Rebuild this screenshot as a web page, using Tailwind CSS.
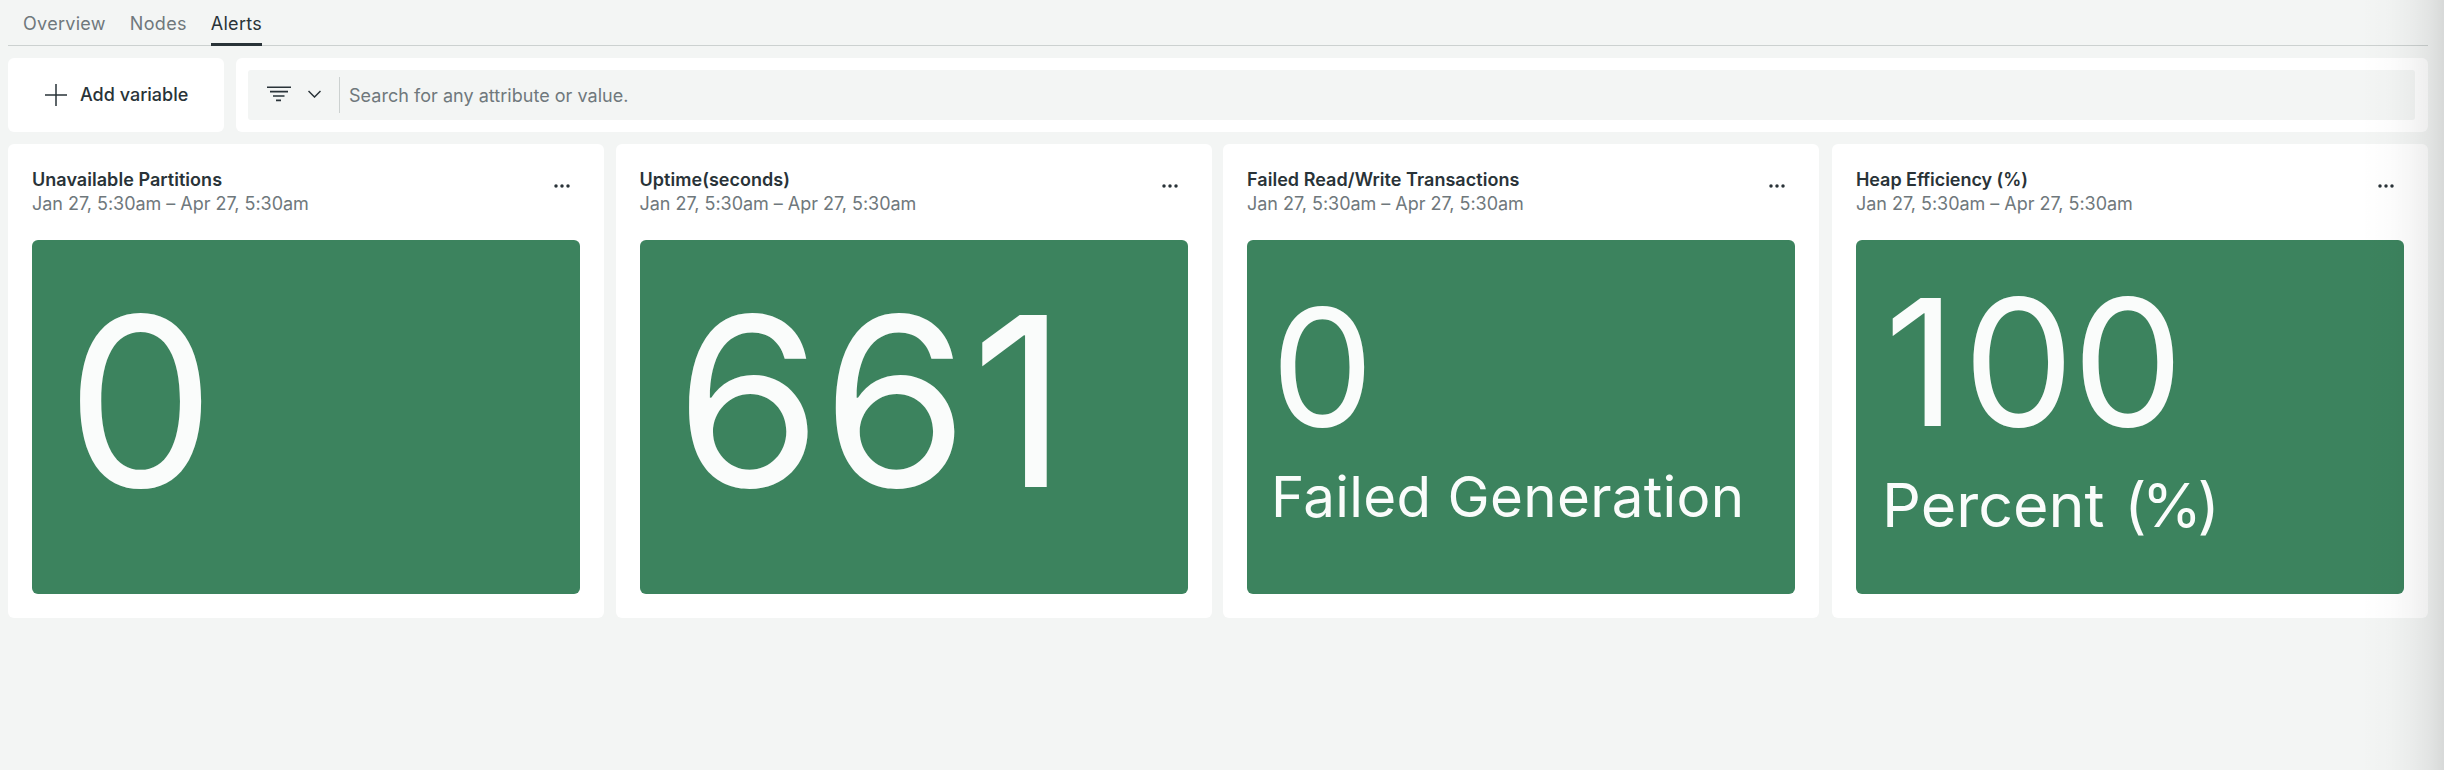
<!DOCTYPE html>
<html lang="en">
<head>
<meta charset="utf-8">
<title>Alerts</title>
<script src="https://cdn.jsdelivr.net/npm/@tailwindcss/browser@4"></script>
</head>
<body class="relative h-[770px] overflow-hidden bg-[#f3f5f4] pl-2 pr-4 font-['Inter',sans-serif] text-[18px] leading-6 text-[#293338]">
<nav class="flex h-[46px] gap-6 border-b border-[#ccd1d0] pl-[15px] pt-3 tracking-[0.3px] text-[#6f787c]">
  <a class="h-[34px]">Overview</a>
  <a class="h-[34px]">Nodes</a>
  <a class="h-[34px] border-b-3 border-[#293338] text-[#293338]">Alerts</a>
</nav>
<div class="mt-3 flex h-[74px] gap-3">
  <button class="flex w-[216px] items-center rounded-md bg-white pl-[37px] font-medium">
    <svg class="mr-[13px] size-[22px]" viewBox="0 0 22 22" fill="none" stroke="#293338" stroke-width="1.5"><path d="M11 0v22M0 11h22"/></svg>
    <span>Add variable</span>
  </button>
  <div class="flex-1 rounded-md bg-white py-3 pl-3 pr-[13px]">
    <div class="flex h-[50px] items-center rounded-[3px] bg-[#f3f5f4] pl-[19px]">
      <svg class="mb-[3px] h-4 w-6" viewBox="0 0 24 16" fill="none" stroke="#293338" stroke-width="1.6"><path d="M0 1.3h24M3 5.6h18M6 10h11.5M9 14.4h5"/></svg>
      <svg class="ml-[17px] mb-[3px] h-2 w-[13px]" viewBox="0 0 13 8" fill="none" stroke="#293338" stroke-width="1.5"><path d="M.5 1l6 6 6-6"/></svg>
      <div class="ml-[18px] h-9 w-px bg-[#ccd1d0]"></div>
      <span class="ml-[9px] mt-[2px] tracking-[0.03px] text-[#6f787c]">Search for any attribute or value.</span>
    </div>
  </div>
</div>
<main class="mt-3 grid grid-cols-4 gap-3">
  <section class="h-[474px] rounded-md bg-white p-6">
    <header class="flex h-[72px] justify-between pr-1.5">
      <div><h2 class="font-semibold tracking-[0.04px]">Unavailable Partitions</h2><p class="tracking-[-0.03px] text-[#6f787c]">Jan 27, 5:30am – Apr 27, 5:30am</p></div>
      <svg class="mt-1.5 size-6" viewBox="0 0 24 24" fill="#293338"><circle cx="6" cy="12" r="1.75"/><circle cx="12" cy="12" r="1.75"/><circle cx="18" cy="12" r="1.75"/></svg>
    </header>
    <div class="h-[354px] rounded-md bg-[#3c835e] pl-[34px] pt-[43px] text-[#fafcfb]">
      <div class="text-[236.5px] leading-none">0</div>
    </div>
  </section>
  <section class="-ml-[0.5px] mr-[0.5px] h-[474px] rounded-md bg-white p-6">
    <header class="flex h-[72px] justify-between pr-1.5">
      <div><h2 class="font-semibold tracking-[0.04px]">Uptime(seconds)</h2><p class="tracking-[-0.03px] text-[#6f787c]">Jan 27, 5:30am – Apr 27, 5:30am</p></div>
      <svg class="mt-1.5 size-6" viewBox="0 0 24 24" fill="#293338"><circle cx="6" cy="12" r="1.75"/><circle cx="12" cy="12" r="1.75"/><circle cx="18" cy="12" r="1.75"/></svg>
    </header>
    <div class="h-[354px] rounded-md bg-[#3c835e] pl-[35.5px] pt-[43px] text-[#fafcfb]">
      <div class="text-[236.5px] leading-none">6<span class="tracking-[3px]">6</span>1</div>
    </div>
  </section>
  <section class="-ml-px mr-px h-[474px] rounded-md bg-white p-6">
    <header class="flex h-[72px] justify-between pr-1.5">
      <div><h2 class="font-semibold tracking-[0.04px]">Failed Read/Write Transactions</h2><p class="tracking-[-0.03px] text-[#6f787c]">Jan 27, 5:30am – Apr 27, 5:30am</p></div>
      <svg class="mt-1.5 size-6" viewBox="0 0 24 24" fill="#293338"><circle cx="6" cy="12" r="1.75"/><circle cx="12" cy="12" r="1.75"/><circle cx="18" cy="12" r="1.75"/></svg>
    </header>
    <div class="h-[354px] rounded-md bg-[#3c835e] pl-[24px] pt-[45px] text-[#fafcfb]">
      <div class="text-[163px] leading-none">0</div>
      <div class="mt-[21px] text-[56.5px] leading-none tracking-[0.3px]">Failed Generation</div>
    </div>
  </section>
  <section class="h-[474px] rounded-md bg-white p-6">
    <header class="flex h-[72px] justify-between pr-1.5">
      <div><h2 class="font-semibold tracking-[-0.06px]">Heap Efficiency (%)</h2><p class="tracking-[-0.03px] text-[#6f787c]">Jan 27, 5:30am – Apr 27, 5:30am</p></div>
      <svg class="mt-1.5 size-6" viewBox="0 0 24 24" fill="#293338"><circle cx="6" cy="12" r="1.75"/><circle cx="12" cy="12" r="1.75"/><circle cx="18" cy="12" r="1.75"/></svg>
    </header>
    <div class="h-[354px] rounded-md bg-[#3c835e] pl-[26px] pt-[34px] text-[#fafcfb]">
      <div class="pl-[2.5px] text-[176.5px] leading-none"><span class="tracking-[6.7px]">1</span><span class="tracking-[-2px]">0</span>0</div>
      <div class="mt-[24px] text-[61px] leading-none">Percent<span class="tracking-[2.5px]"> </span><span class="tracking-[-4.5px]">(%</span>)</div>
    </div>
  </section>
</main>
<div class="pointer-events-none absolute inset-y-0 right-0 w-[84px] bg-[linear-gradient(to_right,transparent_0%,rgba(0,0,0,0.01)_35%,rgba(0,0,0,0.035)_60%,rgba(0,0,0,0.065)_81%,rgba(0,0,0,0.115)_100%)]"></div>
</body>
</html>
